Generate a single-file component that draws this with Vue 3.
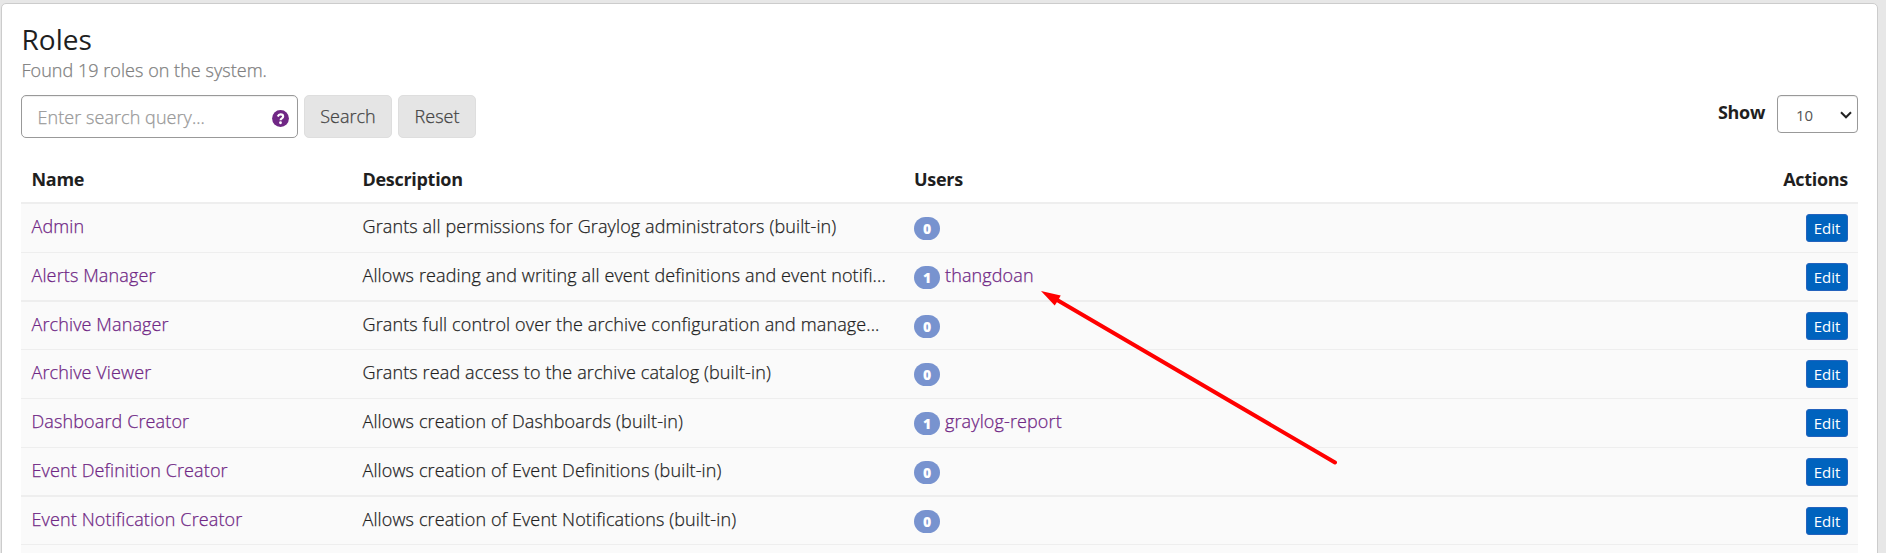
<script setup>
const roles = [
  { name: 'Admin', description: 'Grants all permissions for Graylog administrators (built-in)', users: [], height: 49, line: 1 },
  { name: 'Alerts Manager', description: 'Allows reading and writing all event definitions and event notifi...', users: ['thangdoan'], height: 49, line: 2 },
  { name: 'Archive Manager', description: 'Grants full control over the archive configuration and manage...', users: [], height: 48, line: 1 },
  { name: 'Archive Viewer', description: 'Grants read access to the archive catalog (built-in)', users: [], height: 49, line: 1 },
  { name: 'Dashboard Creator', description: 'Allows creation of Dashboards (built-in)', users: ['graylog-report'], height: 49, line: 1 },
  { name: 'Event Definition Creator', description: 'Allows creation of Event Definitions (built-in)', users: [], height: 49, line: 2 },
  { name: 'Event Notification Creator', description: 'Allows creation of Event Notifications (built-in)', users: [], height: 48, line: 1 },
]
</script>

<template>
  <main class="page">
    <section class="panel">
      <h2 class="title">Roles</h2>
      <p class="subtitle">Found 19 roles on the system.</p>
      <div class="toolbar">
        <div class="search">
          <span class="placeholder">Enter search query...</span>
          <svg class="help" viewBox="0 0 512 512">
            <circle cx="256" cy="256" r="254" fill="#702785" />
            <path d="M174 196c18-42 44-64 84-64 43 0 78 25 78 65 0 55-78 54-78 108" fill="none" stroke="#fff" stroke-width="64" />
            <circle cx="256" cy="384" r="42" fill="#fff" />
          </svg>
        </div>
        <button class="btn search-btn">Search</button>
        <button class="btn reset-btn">Reset</button>
        <div class="page-size">
          <span class="show">Show</span>
          <div class="select">
            <span>10</span>
            <svg class="chevron" viewBox="0 0 12 8"><path d="M1 1.3 6 6.3l5-5" fill="none" stroke="#222" stroke-width="2" /></svg>
          </div>
        </div>
      </div>
      <div class="table">
        <div class="row head">
          <span>Name</span><span>Description</span><span>Users</span><span class="right">Actions</span>
        </div>
        <div v-for="r in roles" :key="r.name" class="row body" :style="{ height: r.height + 'px', borderBottomWidth: r.line + 'px' }">
          <a class="text link">{{ r.name }}</a>
          <span class="text">{{ r.description }}</span>
          <div class="users">
            <span class="badge">{{ r.users.length }}</span>
            <a v-for="u in r.users" :key="u" class="text link">{{ u }}</a>
          </div>
          <button class="edit">Edit</button>
        </div>
        <div class="row body rest"></div>
      </div>
    </section>
    <svg class="arrow" width="300" height="180" viewBox="1039 289 300 180">
      <path d="M1058 300.500 1335 462.500" stroke="#f00" stroke-width="4" stroke-linecap="round" />
      <path d="M1041 291 1060.700 295.500 1058 300.500 1054.700 305.500z" fill="#f00" />
    </svg>
  </main>
</template>

<style>
body { background: #e7e7e7; }
</style>

<style scoped>
* { box-sizing: border-box; }
.page {
  position: relative;
  height: 553px;
  overflow: hidden;
  padding: 3px 8px 0 1px;
  background: #e7e7e7;
  color: #1f1f1f;
  font-family: "Open Sans", "Noto Sans", sans-serif;
  font-size: 18px;
}
.panel {
  height: 600px;
  padding: 18px 19px 0 19px;
  border: 1px solid #ccc;
  border-radius: 5px;
  background: #fff;
}
.title { margin: 0 0 0 0.5px; font-size: 28px; line-height: 34px; font-weight: 400; }
.subtitle, .placeholder, .btn, .text { font-weight: 300; -webkit-text-stroke: 0.25px currentColor; }
.subtitle { margin: 1px 0 0 0.5px; line-height: 26px; letter-spacing: 0.04px; color: #808080; }
.toolbar { display: flex; align-items: flex-start; height: 57px; margin-top: 12px; }
.search {
  display: flex;
  align-items: center;
  justify-content: space-between;
  width: 277px;
  height: 43px;
  padding: 0 8px 0 15.5px;
  border: 1px solid #999;
  border-radius: 5px;
  box-shadow: inset 0 1px 1px #0001;
}
.placeholder { color: #999; letter-spacing: 0.06px; }
.help { width: 17px; height: 17px; margin-top: 4px; }
.btn {
  height: 43px;
  margin-left: 6px;
  padding: 0 0 1px;
  border: 1px solid #dedede;
  border-radius: 5px;
  background: #e5e5e5;
  color: #444;
  font-family: inherit;
  font-size: 18px;
}
.search-btn { width: 88px; }
.reset-btn { width: 78px; }
.page-size { display: flex; margin-left: auto; }
.show { margin-right: 12px; line-height: 34px; font-weight: 700; letter-spacing: -0.3px; }
.select {
  display: flex;
  align-items: center;
  justify-content: space-between;
  width: 81px;
  height: 38px;
  padding: 1px 5px 0 18px;
  border: 1px solid #999;
  border-radius: 4px;
  box-shadow: inset 0 1px 1px #0001;
  color: #555;
  font-size: 15px;
}
.chevron { width: 12px; height: 8px; }
.row {
  display: grid;
  grid-template-columns: 331px 551.500px 1fr 42px;
  padding: 0 10px 0 10.500px;
}
.head {
  height: 52px;
  padding-top: 13px;
  border-bottom: 2px solid #eee;
  line-height: 28px;
  font-weight: 700;
  letter-spacing: -0.3px;
}
.right { justify-self: end; }
.body {
  align-items: start;
  padding-top: 10px;
  border-bottom: 0 solid #eee;
  background: #fafafa;
}
.text { line-height: 24px; letter-spacing: 0.12px; white-space: nowrap; }
.link { color: #702785; }
.users { display: flex; }
.badge {
  width: 26px;
  height: 23px;
  margin: 3px 5px 0 0;
  border-radius: 12px;
  background: #7893cf;
  color: #fff;
  font-size: 14px;
  font-weight: 800;
  line-height: 23px;
  text-align: center;
}
.edit {
  width: 42px;
  height: 28px;
  padding: 0;
  border: 1px solid #2463bd;
  border-radius: 3px;
  background: #0063be;
  color: #fff;
  font: 15px/24px "Open Sans", sans-serif;
}
.rest { height: 40px; }
.arrow { position: absolute; left: 1039px; top: 289px; }
</style>
